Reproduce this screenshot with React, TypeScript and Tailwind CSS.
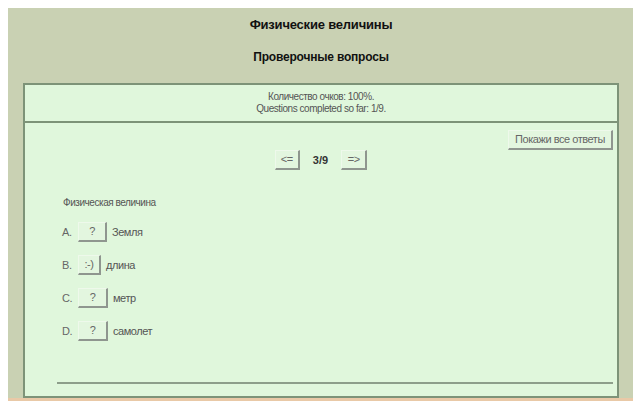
import type { ReactNode } from 'react'

const narrow = { fontFamily: '"Liberation Sans Narrow", "Liberation Sans", Arial, sans-serif', letterSpacing: '-0.45px' }

function QuizButton({ children, className = '' }: { children: ReactNode; className?: string }) {
  return (
    <button
      className={`flex h-[20px] items-center justify-center border-t border-l border-r-2 border-b-2 border-t-[#eef9eb] border-l-[#eef9eb] border-r-[#8f968f] border-b-[#8f968f] bg-[#e3f6df] text-[11px] leading-none text-[#666] ${className}`}
      style={narrow}
    >
      {children}
    </button>
  )
}

const answers = [
  { key: 'A.', mark: '?', text: 'Земля', w: 'w-[29px]' },
  { key: 'B.', mark: ':-)', text: 'длина', w: 'w-[23px]' },
  { key: 'C.', mark: '?', text: 'метр', w: 'w-[30px]' },
  { key: 'D.', mark: '?', text: 'самолет', w: 'w-[30px]' },
]

export default function App() {
  return (
    <div className="flex h-[401px] w-[633px] flex-col overflow-hidden bg-white pl-[8px] pt-[8px]" style={{ fontFamily: '"Liberation Sans", Arial, sans-serif' }}>
      <div className="flex flex-1 flex-col bg-[#c9d1b3] pl-[15px] pr-[14px] pt-[9px]">
        <h1 className="text-center text-[13px] font-bold leading-[16px] tracking-[-0.2px] text-[#111]">Физические величины</h1>
        <h2 className="mt-[16px] text-center text-[12px] font-bold leading-[16px] tracking-[-0.2px] text-[#111]">Проверочные вопросы</h2>

        <div className="mt-[18px] h-[40px] border-2 border-[#7d9378] bg-[#e0f7dc] pt-[6px] text-center text-[10px] leading-[12px] text-[#555]" style={narrow}>
          <div>Количество очков: 100%.</div>
          <div>Questions completed so far: 1/9.</div>
        </div>

        <div className="flex flex-1 flex-col border-2 border-t-0 border-[#7d9378] bg-[#e0f7dc]">
          <div className="flex justify-end pr-[4px] pt-[7px]">
            <QuizButton className="w-[105px] text-[#444]">Покажи все ответы</QuizButton>
          </div>

          <div className="flex items-center justify-center">
            <QuizButton className="w-[25px]">&lt;=</QuizButton>
            <span className="mx-[13px] text-[11px] font-bold text-[#333]">3/9</span>
            <QuizButton className="w-[26px]">=&gt;</QuizButton>
          </div>

          <div className="ml-[38px] mt-[26px] text-[10px] leading-[14px] text-[#555]" style={narrow}>
            Физическая величина
          </div>

          <div className="ml-[37px] mt-[12px] flex flex-col gap-[13px]">
            {answers.map((a) => (
              <div key={a.key} className="flex h-[20px] items-center">
                <span className="w-[16px] text-[11px] text-[#666]" style={narrow}>{a.key}</span>
                <QuizButton className={a.w}>{a.mark}</QuizButton>
                <span className="ml-[5px] text-[11px] text-[#555]" style={narrow}>
                  {a.text}
                </span>
              </div>
            ))}
          </div>

          <div className="mb-[12px] ml-[32px] mr-[4px] mt-auto h-[2px] bg-[#8d9e8a]" />
        </div>
      </div>
      <div className="h-[3px] bg-[#e9c9a7]" />
    </div>
  )
}
